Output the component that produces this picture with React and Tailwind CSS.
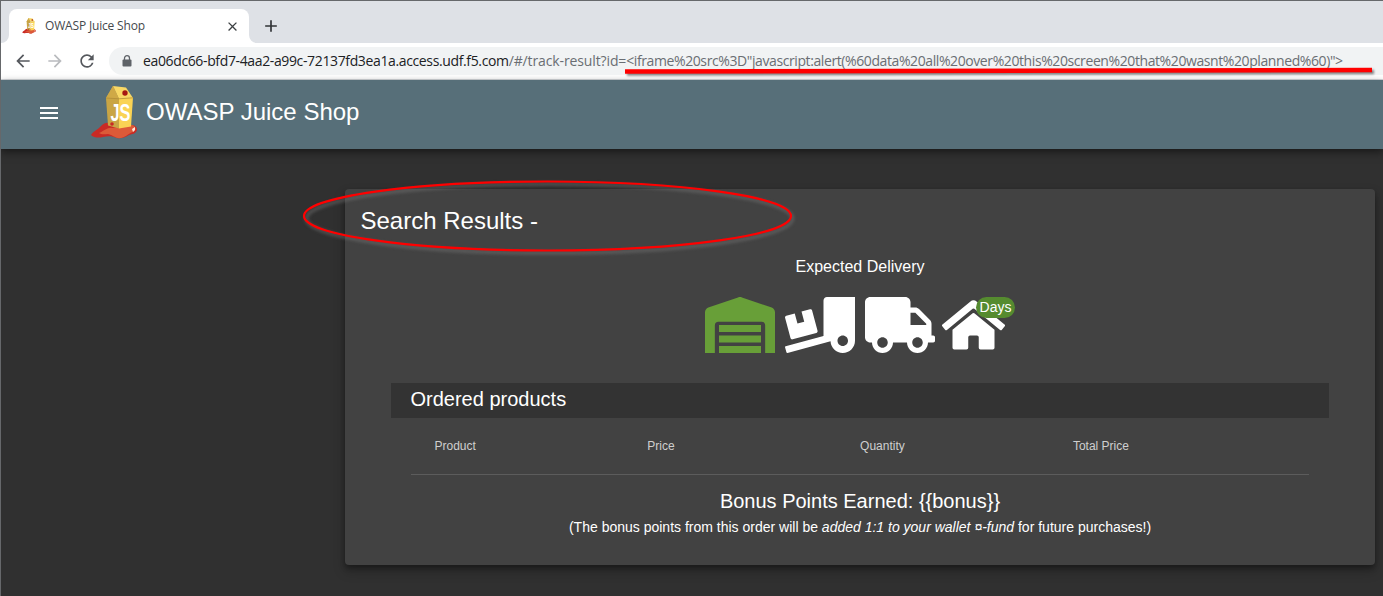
import React from "react";
import { FaTruckLoading, FaTruck, FaHome } from "react-icons/fa";
import { MdArrowBack, MdArrowForward, MdRefresh, MdMenu, MdAdd, MdClose } from "react-icons/md";

function JuiceLogo({ className }) {
  return (
    <svg viewBox="0 0 46 54" className={`overflow-visible ${className}`}>
      <path d="M0 49C2 45 7 44 10 40c3-4 9-4 14-3l16 2c4 0 6 2 6 5-1 4-5 4-8 5-3 2-8 4-12 3-5-2-9-2-14-1-4 1-9 1-12-2z" fill="#c92a25" />
      <path d="M8 47c4-1 8-6 13-5l20-3c4 1 5 5 1 7-4 1-7 5-12 6-5 1-8-3-13-4-3 0-6 1-9-1z" fill="#dc5a38" />
      <path d="M15 12L22 0l6 12.500v30l-11-3z" fill="#c9a545" />
      <path d="M22 0l13 1.500 7 10.500-14 1z" fill="#f8d866" />
      <path d="M28 12.500l14-1-2 29-12 2z" fill="#fad354" />
      <path d="M15 12L22 0l6 12.500z" fill="#cfa946" />
      <path d="M15 12l13 .8 14-1" fill="none" stroke="#ae8a35" strokeWidth="0.7" />
      <circle cx="34" cy="7" r="2.700" fill="#a61812" />
      <circle cx="21" cy="38" r="1.800" fill="#c92a25" />
      <path d="M41 43l3-2v3l-2 2z" fill="#ffe7dd" />
      <text
        x="19.500"
        y="35"
        textLength="20"
        lengthAdjust="spacingAndGlyphs"
        fontFamily="Liberation Sans, sans-serif"
        fontWeight="bold"
        fontSize="24.500"
        fill="#fff"
      >
        JS
      </text>
    </svg>
  );
}

function Warehouse({ className }) {
  return (
    <svg viewBox="0 0 640 512" className={className} fill="currentColor">
      <path d="M0 512V142c0-20 12-37 30-45L302 4c12-5 24-5 36 0l272 93c18 8 30 25 30 45v370h-90V258c0-18-14-32-32-32H122c-18 0-32 14-32 32v254z" />
      <path d="M128 256h384v64H128zM128 352h384v64H128zM128 448h384v64H128z" />
    </svg>
  );
}

function Lock({ className }) {
  return (
    <svg viewBox="0 0 10 12" className={className}>
      <path d="M2.500 5V3.200a2.500 2.500 0 0 1 5 0V5" fill="none" stroke="currentColor" strokeWidth="1.300" />
      <rect x="0.500" y="4.500" width="9" height="7" rx="1" fill="currentColor" />
    </svg>
  );
}

function TabStrip() {
  return (
    <div className="flex h-[42px] items-end bg-[#dee1e6] pl-2">
      <div className="relative flex h-[34px] w-60 items-center rounded-t-lg bg-white pl-[13px] pr-[9px]">
        <JuiceLogo className="h-4 w-[14px]" />
        <span className="ml-[9px] flex-1 whitespace-nowrap text-[12px] tracking-[-0.17px] text-[#45484c]">OWASP Juice Shop</span>
        <MdClose className="size-[15px] text-[#3c4043]" />
        <svg className="absolute -left-2 bottom-0 size-2" viewBox="0 0 8 8"><path d="M8 0v8H0a8 8 0 0 0 8-8z" fill="#fff" /></svg>
        <svg className="absolute -right-2 bottom-0 size-2" viewBox="0 0 8 8"><path d="M0 0v8h8a8 8 0 0 1-8-8z" fill="#fff" /></svg>
      </div>
      <MdAdd className="mb-[7px] ml-[12px] size-[20px] text-[#303336]" />
    </div>
  );
}

function Toolbar() {
  return (
    <div className="flex h-[37px] items-center border-b border-[#d5d8dc] bg-white">
      <MdArrowBack className="ml-[12px] size-5 text-[#55585d]" />
      <MdArrowForward className="ml-[12px] size-5 text-[#b9bbbe]" />
      <MdRefresh className="ml-[12px] size-5 text-[#55585d]" />
      <div className="relative ml-[12px] flex h-7 flex-1 items-center rounded-l-full bg-[#f1f3f4]">
        <Lock className="ml-[13px] h-3 w-[10px] text-[#5f6368]" />
        <span className="-mt-[2px] ml-[11px] whitespace-nowrap text-[14px] text-[#6a6e73]">
          <span className="tracking-[-0.365px] text-[#202124]">ea06dc66-bfd7-4aa2-a99c-72137fd3ea1a.access.udf.f5.com</span>
          <span className="tracking-[-0.12px]">/#/track-result?id=</span>
          <span className="tracking-[-0.405px]">&lt;iframe%20src%3D"javascript:alert(%60data%20all%20over%20this%20screen%20that%20wasnt%20planned%60)"&gt;</span>
        </span>
        <svg className="absolute left-[515px] top-[18px] h-[12px] w-[756px] overflow-visible drop-shadow-[2px_2px_1px_rgba(0,0,0,0.45)]" viewBox="0 0 756 12">
          <path d="M1 6.500L748 5" stroke="#f00" strokeWidth="4.500" />
        </svg>
      </div>
    </div>
  );
}

const columns = ["Product", "Price", "Quantity", "Total Price"];

function ResultCard() {
  return (
    <section className="relative h-[376px] w-[1030px] rounded bg-[#424242] px-[46px] shadow-[0_3px_5px_rgba(0,0,0,0.3),0_6px_12px_rgba(0,0,0,0.25)]">
      <h1 className="-ml-[30.500px] pt-4 text-[24px] leading-8">Search Results -</h1>
      <p className="mt-[20px] text-center text-[16px] leading-5">Expected Delivery</p>
      <div className="mt-[20px] flex justify-center gap-[10px]">
        <Warehouse className="h-14 w-[70px] text-[#689f38]" />
        <FaTruckLoading className="h-14 w-[70px]" />
        <FaTruck className="h-14 w-[70px]" />
        <div className="relative -ml-[3px] w-[73px]">
          <FaHome className="h-14 w-[63px]" />
          <span className="absolute left-[34px] top-0 flex h-[21px] w-[39px] items-center justify-center rounded-full bg-[#558b2f] text-[14px]">Days</span>
        </div>
      </div>
      <h2 className="mt-[30px] h-[35px] bg-[#333333] pl-[19.500px] text-[20px] leading-8">Ordered products</h2>
      <div className="mx-[20px] flex h-[57px] items-center border-b border-[#5c5c5c] pb-px pl-[23.500px] text-[12px] font-normal text-[#cfcfcf]">
        {columns.map((name) => (
          <span key={name} className="w-[212.800px]">{name}</span>
        ))}
      </div>
      <h3 className="mt-[10px] text-center text-[20px] leading-8">Bonus Points Earned: {"{{bonus}}"}</h3>
      <p className="text-center text-[14px] leading-5">
        (The bonus points from this order will be <i>added 1:1 to your wallet ¤-fund</i> for future purchases!)
      </p>
      <svg className="absolute -left-[43px] -top-[10px] h-[74px] w-[494px] overflow-visible" viewBox="0 0 494 74">
        <ellipse cx="247.500" cy="39.500" rx="243" ry="34.500" fill="none" stroke="#858585" strokeOpacity="0.35" strokeWidth="4" className="blur-[1.500px]" />
        <ellipse cx="245.500" cy="37" rx="243.500" ry="34.500" fill="none" stroke="#f00" strokeWidth="2.200" />
      </svg>
    </section>
  );
}

export default function App() {
  return (
    <div className="flex h-[596px] w-[1383px] flex-col overflow-hidden border-l border-t border-[#66686b] bg-[#303030] font-['Liberation_Sans',Arial,sans-serif] text-white">
      <div className="font-['Open_Sans',sans-serif]">
        <TabStrip />
        <Toolbar />
      </div>
      <header className="flex h-[69px] shrink-0 items-center bg-[#576f79] shadow-[0_3px_8px_rgba(0,0,0,0.5)]">
        <MdMenu className="-mt-[4px] ml-9 size-6" />
        <JuiceLogo className="-mt-1 ml-[30px] h-[54px] w-[46px]" />
        <span className="-mt-[5px] ml-[9px] text-[24px]">OWASP Juice Shop</span>
      </header>
      <main className="flex justify-end pr-2 pt-10">
        <ResultCard />
      </main>
    </div>
  );
}
